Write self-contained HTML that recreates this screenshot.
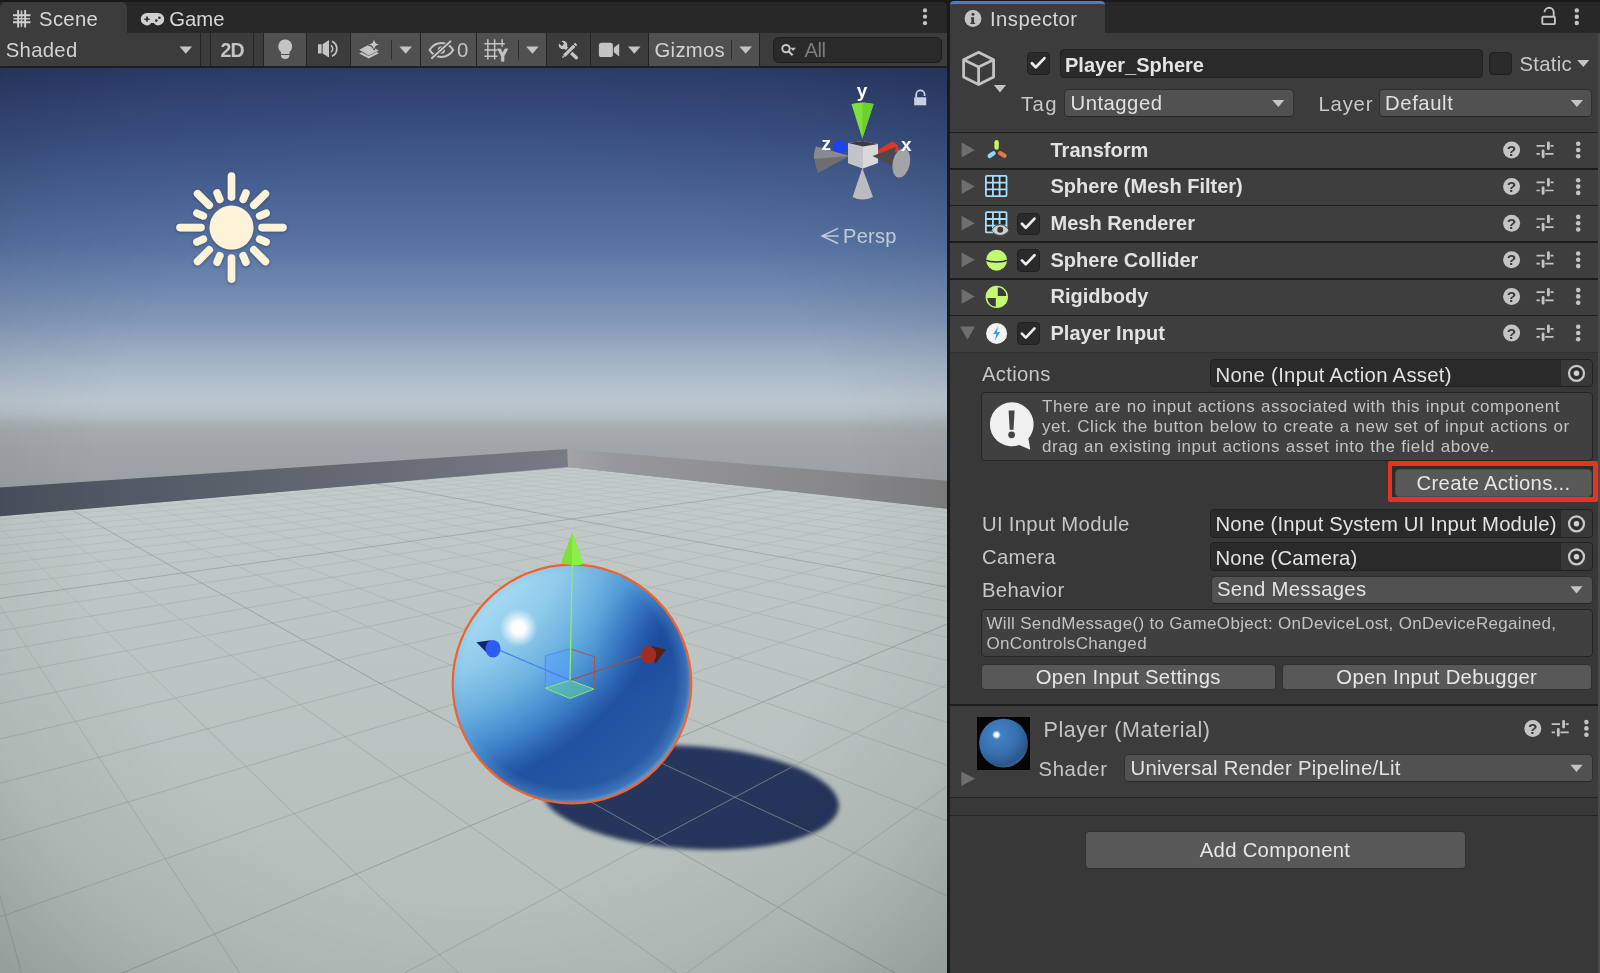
<!DOCTYPE html>
<html lang="en">
<head>
<meta charset="utf-8">
<title>Unity Editor - Player Input</title>
<style>
*{box-sizing:border-box;margin:0;padding:0}
html,body{width:1600px;height:973px;overflow:hidden;background:#191919}
body{position:relative;font-family:"Liberation Sans",sans-serif;font-size:20.300px;color:#d2d2d2;letter-spacing:.3px}
#root{position:absolute;left:0;top:0;width:1600px;height:973px;will-change:transform}
.a{position:absolute}
.t{position:absolute;white-space:nowrap;line-height:24px;height:24px}
.b{font-weight:bold}
/* scene panel */
#scenePanel{left:0;top:1.500px;width:947px;height:971.500px;background:#282828;border-radius:5px 5px 0 0}
#sceneTabBar{left:0;top:1.500px;width:947px;height:31.500px;background:#282828;border-top-right-radius:6px}
#sceneTab{left:0;top:1.500px;width:127px;height:32.500px;background:#3c3c3c;border-radius:6px 6px 0 0}
#toolbar{left:0;top:33px;width:947px;height:34px;background:#3c3c3c}
#toolbarLine{left:0;top:66px;width:947px;height:2px;background:#1f1f1f}
.sep{position:absolute;top:33px;width:1px;height:33px;background:#232323}
.lit{position:absolute;top:33px;height:33px;background:#505050}
#scene{left:0;top:68px;width:947px;height:905px;overflow:hidden}
/* inspector */
#divider{left:947px;top:0;width:3px;height:973px;background:#191919}
#insp{left:950px;top:1.500px;width:650px;height:971.500px;background:#383838}
#inspTabBar{left:950px;top:1.500px;width:650px;height:31.500px;background:#282828}
#inspTab{left:950px;top:1px;width:155px;height:32px;background:#3c3c3c;border-top:3px solid #4a7dc4;border-radius:4px 4px 0 0}
.hline{position:absolute;left:950px;width:650px;height:1px;background:#1e1e1e}
.hdr{position:absolute;left:950px;width:650px;background:#3e3e3e}
.field{position:absolute;background:#2a2a2a;border:1px solid #212121;border-radius:4px}
.drop{position:absolute;background:#515151;border:1px solid #2f2f2f;border-bottom-color:#262626;border-radius:4.500px}
.btn{position:absolute;background:#585858;border:1px solid #303030;border-radius:4px;text-align:center}
.chk{position:absolute;width:22.700px;height:22.700px;background:#2a2a2a;border:1px solid #212121;border-radius:4px}
.help{position:absolute;border:1px solid #232323;border-radius:4px;background:#404040}
.small{font-size:17px;letter-spacing:.53px;word-spacing:.5px;line-height:20px;height:20px}
</style>
</head>
<body>
<div id="root">
<!-- ================= SCENE PANEL ================= -->
<div class="a" id="scenePanel"></div>
<div class="a" id="sceneTabBar"></div>
<div class="a" id="sceneTab"></div>
<div class="a" id="toolbar"></div>
<div class="lit" style="left:264px;width:42px"></div>
<div class="lit" style="left:351px;width:69px"></div>
<div class="lit" style="left:421px;width:55px"></div>
<div class="lit" style="left:477px;width:69px"></div>
<div class="lit" style="left:649px;width:110px"></div>
<div class="sep" style="left:200px"></div><div class="sep" style="left:210px"></div>
<div class="sep" style="left:253px"></div><div class="sep" style="left:263px"></div>
<div class="sep" style="left:306px"></div><div class="sep" style="left:350px"></div>
<div class="sep" style="left:420px"></div><div class="sep" style="left:476px"></div>
<div class="sep" style="left:546px"></div><div class="sep" style="left:590px"></div>
<div class="sep" style="left:648px"></div><div class="sep" style="left:759px"></div>
<div class="t" style="left:39.100px;top:7px;color:#d6d6d6">Scene</div>
<div class="t" style="left:169.300px;top:7px;color:#d6d6d6;letter-spacing:0">Game</div>
<div class="t" style="left:5.800px;top:38px;color:#d2d2d2">Shaded</div>
<div class="t b" style="left:220.5px;top:38px;color:#c4c4c4;letter-spacing:-.9px;font-size:19.500px">2D</div>
<div class="t" style="left:457px;top:38px;color:#c4c4c4">0</div>
<div class="t" style="left:654.5px;top:38px;color:#d2d2d2">Gizmos</div>
<div class="a" style="left:773px;top:37px;width:169px;height:26px;background:#2a2a2a;border:1px solid #1c1c1c;border-radius:6px"></div>
<div class="t" style="left:804.500px;top:38px;color:#7c7c7c;letter-spacing:-.5px">All</div>
<svg class="a" style="left:0;top:0" width="947" height="68" viewBox="0 0 947 68">
<g fill="#c4c4c4">
<!-- scene tab icon -->
<path d="M17.2 10h1.9v17.5h-1.9zM24.2 10h1.9v17.5h-1.9zM13 14.3h17.5v1.9H13zM13 21.3h17.5v1.9H13z" fill="#d0d0d0"/>
<path d="M20.7 10.5h1.6v16.5h-1.6zM13.5 17.9h16.5v1.6H13.5z" fill="#d0d0d0" opacity=".9"/>
<!-- game icon -->
<path d="M147 13h11a6.2 6.2 0 0 1 0 12.4c-2 0-3.2-1-4-2.4h-3c-.8 1.4-2 2.4-4 2.4a6.2 6.2 0 0 1 0-12.4z" fill="#d0d0d0"/>
<path d="M146.2 16.6h1.6v1.8h1.8v1.6h-1.8v1.8h-1.6v-1.8h-1.8v-1.6h1.8z" fill="#282828"/>
<circle cx="156.3" cy="20.6" r="1.3" fill="#282828"/><circle cx="159.4" cy="17.8" r="1.3" fill="#282828"/>
<!-- kebab -->
<circle cx="925" cy="10.4" r="2.1"/><circle cx="925" cy="16.7" r="2.1"/><circle cx="925" cy="23.2" r="2.1"/>
<!-- dropdown arrows -->
<path d="M179.5 46.5h12.6l-6.3 7.2z"/>
<path d="M399.4 46.5h12.6l-6.3 7.2z"/>
<path d="M526.1 46.5h12.6l-6.3 7.2z"/>
<path d="M628 46.5h12.6l-6.3 7.2z"/>
<path d="M739.4 46.5h12.6l-6.3 7.2z"/>
<!-- light bulb -->
<path d="M285.200 39.600a6.900 6.900 0 0 1 4.300 12.300v2.200h-8.600v-2.200a6.900 6.900 0 0 1 4.300-12.300z"/>
<path d="M281 55h8.400v.6a4.200 3.500 0 0 1-8.400 0z"/>
<!-- audio -->
<path d="M318 44.2h3.6v9.3H318zM322.6 44.2l6.4-4.2v17.6l-6.4-4.1z"/>
<path d="M330.8 44.6a4.6 4.6 0 0 1 0 8.4v-1.9a2.8 2.8 0 0 0 0-4.6z"/>
<path d="M332.4 40.6a9 9 0 0 1 0 16.4l-.8-1.6a7.2 7.2 0 0 0 0-13.2z"/>
<!-- fx -->
<path d="M359.200 49.800L367.800 45.300L378.900 50.400L368.700 55.500Z"/>
<path d="M359.200 53.500l2.300-1.200 7.200 3.700 7.900-3.900 2.300 1.200-10.200 5.200z"/>
<path d="M374 38.900c.6 3.700 1.900 5 5.600 5.600-3.700.6-5 1.900-5.600 5.600-.6-3.700-1.900-5-5.600-5.600 3.700-.6 5-1.900 5.600-5.600z" stroke="#505050" stroke-width="1.500" paint-order="stroke"/>
<!-- eye slash -->
<path d="M429.600 50c3.200-5 7.200-7 11.800-7s8.600 2 11.800 7c-3.200 5-7.200 7-11.800 7s-8.600-2-11.800-7z" fill="none" stroke="#c4c4c4" stroke-width="2.100"/>
<circle cx="441.400" cy="50" r="3.700"/>
<path d="M431.500 58.700L451.300 40.800" stroke="#505050" stroke-width="4.200" fill="none"/>
<path d="M431.800 58.200L450.600 41.300" stroke="#c4c4c4" stroke-width="1.900" fill="none" stroke-linecap="round"/>
<!-- grid snap icon -->
<path d="M487.100 39.200h1.500V59.400h-1.500zM493.900 39.200h1.500V59.400h-1.500zM501.400 39.200h1.500V46.800h-1.500zM484.400 43h20.400v1.500H484.400zM484.400 49.200h13v1.500h-13zM484.400 55.400h13v1.500h-13z"/>
<path d="M497.600 48.900h2.900l2.200 4.400 2.200-4.400h2.900l-3.800 7.100v5.200h-2.600v-5.200z" stroke="#c4c4c4" stroke-width=".7"/>
<!-- tools -->
<path d="M565.300 47.300L576.300 57.700" stroke="#c4c4c4" stroke-width="3.500" stroke-linecap="round" fill="none"/>
<circle cx="563" cy="45" r="4.300"/>
<path d="M563 45L557.500 39.500" stroke="#3c3c3c" stroke-width="3.400" fill="none"/>
<path d="M575.070 41.670L578.330 44.930L566.230 57.030L560.900 59.100L562.970 53.770Z" fill="#c4c4c4" stroke="#3c3c3c" stroke-width="1.300"/>
<path d="M572.900 43.900l3.200 3.200" stroke="#3c3c3c" stroke-width="1" fill="none"/>
<path d="M563.400 55.200l1.500 1.500" stroke="#3c3c3c" stroke-width=".7" fill="none"/>
<!-- camera -->
<rect x="598.900" y="42.800" width="14" height="14.200" rx="2.600"/>
<path d="M613.800 47.800l5.400-4.200v12.800l-5.400-4.200z"/>
<!-- search icon -->
<circle cx="786" cy="48.600" r="3.700" fill="none" stroke="#c4c4c4" stroke-width="2"/>
<path d="M788.600 51.200l4 4" stroke="#c4c4c4" stroke-width="2.200" fill="none"/>
<path d="M790.300 47.800h5.600l-2.800 3.300z"/>
</g>
<!-- inner separators -->
<path d="M391.500 40v19.500M518.500 40v19.500M731.500 40v19.500" stroke="#2e2e2e" stroke-width="1"/>
</svg>

<div class="a" id="toolbarLine"></div>
<div class="a" id="scene">
<svg class="a" style="left:0;top:0" width="947" height="905" viewBox="0 68 947 905">
<defs>
<linearGradient id="sky" x1="0" y1="68" x2="0" y2="490" gradientUnits="userSpaceOnUse">
<stop offset="0" stop-color="#2d3e6d"/>
<stop offset="0.199" stop-color="#3f5689"/>
<stop offset="0.425" stop-color="#5875a4"/>
<stop offset="0.597" stop-color="#8298b8"/>
<stop offset="0.706" stop-color="#a6b6c7"/>
<stop offset="0.769" stop-color="#b7c4ce"/>
<stop offset="0.791" stop-color="#bbc7d0"/>
<stop offset="0.819" stop-color="#b5c0c8"/>
<stop offset="0.855" stop-color="#a5abae"/>
<stop offset="0.905" stop-color="#9fa5a8"/>
<stop offset="1" stop-color="#999fa3"/>
</linearGradient>
<linearGradient id="wallL" x1="0" y1="0" x2="568" y2="0" gradientUnits="userSpaceOnUse">
<stop offset="0" stop-color="#4a505c"/><stop offset="0.6" stop-color="#636873"/><stop offset="1" stop-color="#787b86"/>
</linearGradient>
<linearGradient id="wallR" x1="568" y1="0" x2="947" y2="0" gradientUnits="userSpaceOnUse">
<stop offset="0" stop-color="#a3a3a8"/><stop offset="0.12" stop-color="#98989c"/><stop offset="1" stop-color="#7f7f81"/>
</linearGradient>
<linearGradient id="floor" x1="0" y1="467" x2="0" y2="973" gradientUnits="userSpaceOnUse">
<stop offset="0" stop-color="#c3cccb"/><stop offset="0.3" stop-color="#bdc6c4"/><stop offset="1" stop-color="#b4bdba"/>
</linearGradient>
<radialGradient id="sph" cx="393" cy="502" r="374" gradientUnits="userSpaceOnUse">
<stop offset="0.36" stop-color="#a8dbf2"/>
<stop offset="0.49" stop-color="#8fcbea"/>
<stop offset="0.59" stop-color="#6db2e0"/>
<stop offset="0.665" stop-color="#4e96d4"/>
<stop offset="0.72" stop-color="#3a7cc4"/>
<stop offset="0.765" stop-color="#2a62ae"/>
<stop offset="0.80" stop-color="#2052a0"/>
<stop offset="0.896" stop-color="#2457a2"/>
<stop offset="1" stop-color="#2a5ea8"/>
</radialGradient>
<radialGradient id="rim" cx="568.500" cy="680.500" r="124" gradientUnits="userSpaceOnUse">
<stop offset="0" stop-color="#6aa8e0" stop-opacity="0"/>
<stop offset="0.86" stop-color="#6aa8e0" stop-opacity="0"/>
<stop offset="0.955" stop-color="#6fa8e0" stop-opacity="0.3"/>
<stop offset="1" stop-color="#8cc0ee" stop-opacity="0.75"/>
</radialGradient>
<radialGradient id="darkspot" cx="655" cy="640" r="60" gradientUnits="userSpaceOnUse">
<stop offset="0" stop-color="#15409a" stop-opacity="0.35"/>
<stop offset="1" stop-color="#15409a" stop-opacity="0"/>
</radialGradient>
<radialGradient id="spec" cx="518.6" cy="628" r="19" gradientUnits="userSpaceOnUse">
<stop offset="0" stop-color="#fff" stop-opacity="1"/>
<stop offset="0.35" stop-color="#fff" stop-opacity="0.95"/>
<stop offset="1" stop-color="#fff" stop-opacity="0"/>
</radialGradient>
<radialGradient id="vig" cx="473" cy="520" r="660" gradientUnits="userSpaceOnUse"><stop offset="0" stop-color="#000" stop-opacity="0"/><stop offset="0.58" stop-color="#000" stop-opacity="0"/><stop offset="0.8" stop-color="#000" stop-opacity="0.055"/><stop offset="1" stop-color="#000" stop-opacity="0.17"/></radialGradient>
<filter id="blur4" x="-20%" y="-20%" width="140%" height="140%"><feGaussianBlur stdDeviation="2.2"/></filter>
<filter id="sunsh" x="-20%" y="-20%" width="140%" height="140%"><feDropShadow dx="0" dy="1" stdDeviation="1.5" flood-color="#1a2850" flood-opacity="0.55"/></filter>
<linearGradient id="gf" x1="0" y1="467" x2="0" y2="973" gradientUnits="userSpaceOnUse"><stop offset="0" stop-color="#fff" stop-opacity="0.22"/><stop offset="0.25" stop-color="#fff" stop-opacity="0.5"/><stop offset="0.6" stop-color="#fff" stop-opacity="0.85"/><stop offset="1" stop-color="#fff" stop-opacity="1"/></linearGradient>
<mask id="gridfade" maskUnits="userSpaceOnUse" x="0" y="400" width="947" height="573"><rect x="0" y="400" width="947" height="573" fill="url(#gf)"/></mask>
<linearGradient id="gf2" x1="0" y1="467" x2="0" y2="973" gradientUnits="userSpaceOnUse"><stop offset="0" stop-color="#fff" stop-opacity="0.6"/><stop offset="0.4" stop-color="#fff" stop-opacity="0.85"/><stop offset="1" stop-color="#fff" stop-opacity="0.82"/></linearGradient>
<mask id="gridfade2" maskUnits="userSpaceOnUse" x="0" y="400" width="947" height="573"><rect x="0" y="400" width="947" height="573" fill="url(#gf2)"/></mask>
<clipPath id="floorclip"><path d="M0 516.3L568 467L947 508.7V973H0Z"/></clipPath>
<clipPath id="shclip"><ellipse cx="690" cy="797.500" rx="146" ry="49" transform="rotate(3.500 690 797.500)"/></clipPath>
<clipPath id="sphclip"><circle cx="572" cy="684" r="119"/></clipPath>
</defs>
<rect x="0" y="68" width="947" height="905" fill="url(#sky)"/>
<path d="M0 516.3L568 467L947 508.7V973H0Z" fill="url(#floor)"/>
<path d="M0 487.5L567.5 449L568 467L0 516.3Z" fill="url(#wallL)"/>
<path d="M567.5 449L947 480.8V508.7L568 467Z" fill="url(#wallR)"/>
<!-- shadow -->
<g clip-path="url(#floorclip)"><ellipse cx="690" cy="797.500" rx="149" ry="51.500" transform="rotate(3.500 690 797.500)" fill="#26365c" filter="url(#blur4)"/>
</g>
<g clip-path="url(#floorclip)" fill="none" mask="url(#gridfade)">
<path d="M29.1 1000.0L-20.0 824.5M944.2 1000.0L970.0 971.7M257.5 1000.0L-20.0 575.7M649.0 1000.0L970.0 769.9M486.0 1000.0L-12.2 515.6M353.9 1000.0L970.0 672.1M714.4 1000.0L29.9 512.1M-20.0 924.0L970.0 576.2M970.0 906.5L107.5 505.7M-20.0 846.4L970.0 549.1M970.0 829.9L143.3 502.7M-20.0 788.5L970.0 528.9M970.0 773.1L177.3 499.9M-20.0 743.6L970.0 513.3M970.0 729.3L209.6 497.2M-20.0 707.8L941.3 506.8M970.0 694.5L240.4 494.6M-20.0 678.6L905.3 502.9M970.0 666.2L269.8 492.2M-20.0 654.4L871.5 499.3M970.0 642.6L297.8 489.8M-20.0 633.8L839.9 495.9M970.0 622.8L324.6 487.6M-20.0 616.3L810.2 492.7M970.0 605.9L350.2 485.5M-20.0 587.8L755.9 486.8M970.0 578.5L398.2 481.5M-20.0 576.1L731.0 484.1M970.0 567.2L420.7 479.6M-20.0 565.7L707.4 481.6M970.0 557.2L442.4 477.8M-20.0 556.4L685.1 479.2M970.0 548.3L463.2 476.1M-20.0 548.0L663.9 476.9M970.0 540.3L483.1 474.5M-20.0 540.4L643.8 474.7M970.0 533.0L502.4 472.9M-20.0 533.5L624.7 472.7M970.0 526.5L520.9 471.3M-20.0 527.3L606.5 470.7M970.0 520.5L538.7 469.8M-20.0 521.5L589.1 468.8M970.0 515.0L555.9 468.4" stroke="#8a9290" stroke-opacity="0.5" stroke-width="1"/>
</g>
<g clip-path="url(#floorclip)" fill="none" mask="url(#gridfade2)"><path d="M58.7 1000.0L970.0 614.3M942.9 1000.0L69.7 508.8M-20.0 601.1L782.3 489.7M970.0 591.2L374.7 483.5M-20.0 516.2L572.5 467.0M970.0 509.9L572.5 467.0" stroke="#7a8280" stroke-opacity="0.62" stroke-width="1"/></g>
<g clip-path="url(#shclip)" fill="none"><path d="M29.1 1000.0L-20.0 824.5M944.2 1000.0L970.0 971.7M257.5 1000.0L-20.0 575.7M649.0 1000.0L970.0 769.9M486.0 1000.0L-12.2 515.6M353.9 1000.0L970.0 672.1M714.4 1000.0L29.9 512.1M-20.0 924.0L970.0 576.2M970.0 906.5L107.5 505.7M-20.0 846.4L970.0 549.1M970.0 829.9L143.3 502.7M-20.0 788.5L970.0 528.9M970.0 773.1L177.3 499.9M-20.0 743.6L970.0 513.3M970.0 729.3L209.6 497.2M-20.0 707.8L941.3 506.8M970.0 694.5L240.4 494.6M-20.0 678.6L905.3 502.9M970.0 666.2L269.8 492.2M-20.0 654.4L871.5 499.3M970.0 642.6L297.8 489.8M-20.0 633.8L839.9 495.9M970.0 622.8L324.6 487.6M-20.0 616.3L810.2 492.7M970.0 605.9L350.2 485.5M-20.0 587.8L755.9 486.8M970.0 578.5L398.2 481.5M-20.0 576.1L731.0 484.1M970.0 567.2L420.7 479.6M-20.0 565.7L707.4 481.6M970.0 557.2L442.4 477.8M-20.0 556.4L685.1 479.2M970.0 548.3L463.2 476.1M-20.0 548.0L663.9 476.9M970.0 540.3L483.1 474.5M-20.0 540.4L643.8 474.7M970.0 533.0L502.4 472.9M-20.0 533.5L624.7 472.7M970.0 526.5L520.9 471.3M-20.0 527.3L606.5 470.7M970.0 520.5L538.7 469.8M-20.0 521.5L589.1 468.8M970.0 515.0L555.9 468.4M58.7 1000.0L970.0 614.3M942.9 1000.0L69.7 508.8M-20.0 601.1L782.3 489.7M970.0 591.2L374.7 483.5M-20.0 516.2L572.5 467.0M970.0 509.9L572.5 467.0" stroke="#8f959a" stroke-opacity="0.45" stroke-width="1"/></g>
<!-- sphere -->
<circle cx="572" cy="684" r="119" fill="url(#sph)"/>
<g clip-path="url(#sphclip)">
<circle cx="655" cy="640" r="60" fill="url(#darkspot)"/>
<circle cx="568.500" cy="680.500" r="124" fill="url(#rim)"/>
<circle cx="518.6" cy="628" r="22" fill="url(#spec)"/>
</g>
<circle cx="572" cy="684" r="119.3" fill="none" stroke="#f0622a" stroke-width="2.200"/>
<!-- move gizmo -->
<path d="M545.3 655.7L570 648.9V680.3L545.3 688.1Z" fill="#5aa0ff" fill-opacity="0.55" stroke="#4a8cf5" stroke-width="1"/>
<path d="M570 680.3L545.3 688.1L570 698.4L594 689Z" fill="#62d0a8" fill-opacity="0.55" stroke="#8aea6a" stroke-width="1"/>
<path d="M570 648.9L594.6 656.7L594 689" fill="none" stroke="#b0504a" stroke-width="1"/>
<path d="M570 680.3L500 650.5" stroke="#3f7ff5" stroke-width="1.2"/>
<path d="M570 680.3L642 655.7" stroke="#a84a48" stroke-width="1.2"/>
<path d="M570 680.3L572.2 564" stroke="#8fee6a" stroke-width="1.3"/>
<path d="M572.2 532.3L561 563Q572 566.5 583.4 564Z" fill="#7fe03c"/>
<path d="M572.2 532.3L572 565.5Q578 565.5 583.4 564Z" fill="#8df048"/>
<path d="M476.4 642.3L491 640.2L487 653Z" fill="#14246e"/>
<ellipse cx="493" cy="648.7" rx="7.6" ry="8.8" fill="#2c5cf0"/>
<path d="M666.2 649.5L651 646L655 664Z" fill="#5a1e18"/>
<ellipse cx="648.5" cy="655" rx="7.6" ry="9" fill="#a02c22"/>
<rect x="0" y="68" width="947" height="905" fill="url(#vig)"/>
<!-- sun -->
<g filter="url(#sunsh)"><path d="M262.0 227.6L283.0 227.6M259.7 239.3L266.1 242.0M253.8 249.9L265.4 261.5M243.2 255.8L245.9 262.2M231.5 258.1L231.5 279.1M219.8 255.8L217.1 262.2M209.2 249.9L197.6 261.5M203.3 239.3L196.9 242.0M201.0 227.6L180.0 227.6M203.3 215.9L196.9 213.2M209.2 205.3L197.6 193.7M219.8 199.4L217.1 193.0M231.5 197.1L231.5 176.1M243.2 199.4L245.9 193.0M253.8 205.3L265.4 193.7M259.7 215.9L266.1 213.2" stroke="#fdf3d8" stroke-width="7.6" stroke-linecap="round" fill="none"/><circle cx="231.5" cy="227.6" r="22" fill="#fdf3d8"/></g>
<!-- orientation gizmo -->
<g id="og">
<circle cx="840.2" cy="147" r="6.8" fill="#1a44f0"/>
<path d="M877 150.500L892 141.500Q898.500 143 899 151L878 158Z" fill="#d63a26"/>
<path d="M849.5 156L816 146.5Q812 158 818 173Z" fill="#6e6e72"/>
<path d="M849.5 156L816 146.5Q813.5 152 814 159Z" fill="#8a8a8e"/>
<path d="M862.3 168L852.6 197Q862 202 873 197Z" fill="#bcbcc0"/>
<path d="M848 143L863 141L878 144V163L863 168.5L848 163Z" fill="#d9d9dc"/>
<path d="M848 143L863 146.5V168.5L848 163Z" fill="#c4c4c8"/>
<path d="M848 143L863 141L878 144L863 146.5Z" fill="#3c3c40"/>
<path d="M872.5 156L897 168Q892 158 896 147Z" fill="#4a4a4e"/>
<ellipse cx="901.3" cy="163" rx="8.6" ry="14.8" transform="rotate(12 901.3 163)" fill="#a4a4a8"/>
<path d="M862.3 138.5L851.5 104Q862 101 873.6 104Z" fill="#7fe03c"/>
<path d="M862.3 138.5L862.3 102.5Q868 102.5 873.6 104Z" fill="#6fce30"/>
</g>
<text x="862.3" y="97" font-family="Liberation Sans, sans-serif" font-weight="bold" font-size="19" fill="#fff" text-anchor="middle">y</text>
<text x="826.5" y="150" font-family="Liberation Sans, sans-serif" font-weight="bold" font-size="19" fill="#fff" text-anchor="middle">z</text>
<text x="906.5" y="151" font-family="Liberation Sans, sans-serif" font-weight="bold" font-size="19" fill="#fff" text-anchor="middle">x</text>
<!-- lock -->
<path d="M916.200 97.500V94.500a4.200 4.200 0 0 1 8.400 0v1.500" fill="none" stroke="#c9cfe0" stroke-width="1.800"/>
<rect x="914.200" y="97.300" width="12" height="8" fill="#c9cfe0"/>
<!-- persp -->
<path d="M837.5 228.6L822 236L837.5 243.2M822 236H838" fill="none" stroke="#c3cad8" stroke-width="1.5" stroke-linecap="round"/>
<text x="843" y="243" font-family="Liberation Sans, sans-serif" font-size="20" letter-spacing="0.3" fill="#c3cad8">Persp</text>
</svg>
</div>
<!-- ================= INSPECTOR ================= -->
<div class="a" id="divider"></div>
<div class="a" id="insp"></div>
<div class="a" id="inspTabBar"></div>
<div class="a" id="inspTab"></div>
<div class="a" style="left:950px;top:33px;width:650px;height:99px;background:#3c3c3c"></div>
<div class="t" style="left:990px;top:6.700px;color:#d6d6d6;letter-spacing:.46px">Inspector</div>
<div class="chk" style="left:1027px;top:52px"></div>
<div class="field" style="left:1060px;top:49px;width:423px;height:29px"></div>
<div class="t b" style="left:1065px;top:53px;color:#e4e4e4;letter-spacing:0;font-size:20px">Player_Sphere</div>
<div class="chk" style="left:1489px;top:52px"></div>
<div class="t" style="left:1519.500px;top:51.500px;color:#c8c8c8">Static</div>
<div class="t" style="left:1021px;top:91.500px;color:#c8c8c8;letter-spacing:1.400px">Tag</div>
<div class="drop" style="left:1064.200px;top:89.300px;width:230.300px;height:27.900px"></div>
<div class="t" style="left:1070.500px;top:90.500px;color:#e0e0e0;letter-spacing:.5px">Untagged</div>
<div class="t" style="left:1318.500px;top:91.500px;color:#c8c8c8;letter-spacing:.8px">Layer</div>
<div class="drop" style="left:1379.400px;top:89.300px;width:213.100px;height:27.900px"></div>
<div class="t" style="left:1385px;top:90.500px;color:#e0e0e0;letter-spacing:.6px">Default</div>
<div class="hdr" style="top:132.4px;height:36.6px"></div>
<div class="t b" style="left:1050.500px;top:137.7px;color:#e2e2e2;letter-spacing:0;font-size:20px">Transform</div>
<div class="hdr" style="top:169.0px;height:36.6px"></div>
<div class="t b" style="left:1050.500px;top:174.3px;color:#e2e2e2;letter-spacing:0;font-size:20px">Sphere (Mesh Filter)</div>
<div class="hdr" style="top:205.6px;height:36.6px"></div>
<div class="t b" style="left:1050.500px;top:210.9px;color:#e2e2e2;letter-spacing:0;font-size:20px">Mesh Renderer</div>
<div class="chk" style="left:1017px;top:212.5px"></div>
<div class="hdr" style="top:242.2px;height:36.6px"></div>
<div class="t b" style="left:1050.500px;top:247.5px;color:#e2e2e2;letter-spacing:0;font-size:20px">Sphere Collider</div>
<div class="chk" style="left:1017px;top:249.1px"></div>
<div class="hdr" style="top:278.8px;height:36.6px"></div>
<div class="t b" style="left:1050.500px;top:284.1px;color:#e2e2e2;letter-spacing:0;font-size:20px">Rigidbody</div>
<div class="hdr" style="top:315.4px;height:36.6px"></div>
<div class="t b" style="left:1050.500px;top:320.7px;color:#e2e2e2;letter-spacing:0;font-size:20px">Player Input</div>
<div class="chk" style="left:1017px;top:322.3px"></div>
<div class="hline" style="top:131.55px;height:1.700px;background:#1e1e1e"></div>
<div class="hline" style="top:168.15px;height:1.700px;background:#1e1e1e"></div>
<div class="hline" style="top:204.75px;height:1.700px;background:#1e1e1e"></div>
<div class="hline" style="top:241.35px;height:1.700px;background:#1e1e1e"></div>
<div class="hline" style="top:277.95px;height:1.700px;background:#1e1e1e"></div>
<div class="hline" style="top:314.55px;height:1.700px;background:#1e1e1e"></div>
<div class="hline" style="top:351.500px;background:#303030"></div>
<div class="t" style="left:982px;top:362px;color:#c6c6c6">Actions</div>
<div class="field" style="left:1210px;top:359px;width:383px;height:28px"></div>
<div class="a" style="left:1561px;top:360px;width:31px;height:26px;background:#383838;border-radius:0 3px 3px 0"></div>
<div class="t" style="left:1215.500px;top:362.500px;color:#e2e2e2">None (Input Action Asset)</div>
<div class="help" style="left:980.500px;top:392px;width:612px;height:69px"></div>
<div class="t small" style="left:1042px;top:396.5px;color:#c2c2c2">There are no input actions associated with this input component</div>
<div class="t small" style="left:1042px;top:416.6px;color:#c2c2c2">yet. Click the button below to create a new set of input actions or</div>
<div class="t small" style="left:1042px;top:436.8px;color:#c2c2c2">drag an existing input actions asset into the field above.</div>
<div class="a" style="left:1387.600px;top:461.200px;width:210.200px;height:40.800px;background:#e43223;border-radius:2px"></div>
<div class="a" style="left:1392.400px;top:466.200px;width:200.400px;height:30.800px;background:#2a2e2e"></div>
<div class="btn" style="left:1394.800px;top:469.200px;width:197.400px;height:27.600px;border-color:#4a4a4a"></div>
<div class="t" style="left:1395px;width:197px;text-align:center;top:470.500px;color:#e6e6e6">Create Actions...</div>
<div class="t" style="left:982px;top:512px;color:#c6c6c6">UI Input Module</div>
<div class="field" style="left:1210px;top:508.800px;width:383px;height:28.800px"></div>
<div class="a" style="left:1561px;top:509.800px;width:31px;height:26.800px;background:#383838;border-radius:0 3px 3px 0"></div>
<div class="t" style="left:1215.500px;top:512.300px;letter-spacing:.18px;color:#e2e2e2">None (Input System UI Input Module)</div>
<div class="t" style="left:982px;top:545px;color:#c6c6c6">Camera</div>
<div class="field" style="left:1210px;top:542.300px;width:383px;height:28.300px"></div>
<div class="a" style="left:1561px;top:543.300px;width:31px;height:26.300px;background:#383838;border-radius:0 3px 3px 0"></div>
<div class="t" style="left:1215.500px;top:545.700px;letter-spacing:.17px;color:#e2e2e2">None (Camera)</div>
<div class="t" style="left:982px;top:578px;color:#c6c6c6">Behavior</div>
<div class="drop" style="left:1210.800px;top:575.700px;width:381.900px;height:28px"></div>
<div class="t" style="left:1217px;top:577px;color:#e2e2e2">Send Messages</div>
<div class="help" style="left:980.500px;top:609px;width:612px;height:48px"></div>
<div class="t small" style="left:986.500px;top:613.8px;color:#c2c2c2;letter-spacing:.32px;word-spacing:0">Will SendMessage() to GameObject: OnDeviceLost, OnDeviceRegained,</div>
<div class="t small" style="left:986.500px;top:633.9px;color:#c2c2c2;letter-spacing:.32px;word-spacing:0">OnControlsChanged</div>
<div class="btn" style="left:981px;top:663.500px;width:294.500px;height:26.500px"></div>
<div class="t" style="left:981px;width:294.500px;text-align:center;top:664.500px;color:#e6e6e6">Open Input Settings</div>
<div class="btn" style="left:1281.500px;top:663.500px;width:310.500px;height:26.500px"></div>
<div class="t" style="left:1281.500px;width:310.500px;text-align:center;top:664.500px;color:#e6e6e6">Open Input Debugger</div>
<div class="hline" style="top:704px;height:1.600px;background:#1f1f1f"></div>
<div class="a" style="left:950px;top:705.600px;width:650px;height:91.400px;background:#3c3c3c"></div>
<div class="a" style="left:977px;top:716.500px;width:53px;height:53px;background:#050505"></div>
<div class="t" style="left:1043.500px;top:717.500px;color:#c4c4c4;font-size:21.500px;letter-spacing:.55px">Player (Material)</div>
<div class="t" style="left:1038.500px;top:757px;color:#c6c6c6;letter-spacing:.6px">Shader</div>
<div class="drop" style="left:1123.800px;top:754px;width:468.900px;height:28.400px"></div>
<div class="t" style="left:1130.500px;top:756px;color:#e2e2e2">Universal Render Pipeline/Lit</div>
<div class="hline" style="top:797px;height:1px;background:#242424"></div>
<div class="hline" style="top:815px;height:1px;background:#242424"></div>
<div class="btn" style="left:1084.500px;top:831px;width:381px;height:37.500px;border-radius:4px"></div>
<div class="t" style="left:1084.500px;width:381px;text-align:center;top:838px;color:#e6e6e6">Add Component</div>
<div class="a" style="left:1598px;top:33px;width:2px;height:940px;background:#4a4a4a"></div>
<svg class="a" style="left:950px;top:0" width="650" height="973" viewBox="950 0 650 973">
<defs><radialGradient id="matg" cx="998" cy="735" r="36" gradientUnits="userSpaceOnUse"><stop offset="0" stop-color="#4585c8"/><stop offset="0.55" stop-color="#376fae"/><stop offset="0.85" stop-color="#2b5688"/><stop offset="1" stop-color="#4a7098"/></radialGradient><radialGradient id="mats" cx="996.500" cy="734.800" r="4.500" gradientUnits="userSpaceOnUse"><stop offset="0" stop-color="#fff"/><stop offset="0.45" stop-color="#fff" stop-opacity=".9"/><stop offset="1" stop-color="#fff" stop-opacity="0"/></radialGradient></defs>
<circle cx="973" cy="18.500" r="8.400" fill="#c4c4c4"/><circle cx="973" cy="14.300" r="1.500" fill="#3c3c3c"/><path d="M971.300 17.200h2.800v5.600h1v1.300h-4.800v-1.300h1v-4.300h-1z" fill="#3c3c3c"/>
<rect x="1542.300" y="16.800" width="12.600" height="7.300" rx="1" fill="none" stroke="#c4c4c4" stroke-width="1.900"/>
<path d="M1544.500 12.300a4.600 4.600 0 0 1 9.200 .2v4" fill="none" stroke="#c4c4c4" stroke-width="1.900"/>
<circle cx="1576.800" cy="10.4" r="2.200" fill="#c4c4c4"/>
<circle cx="1576.800" cy="16.7" r="2.200" fill="#c4c4c4"/>
<circle cx="1576.800" cy="23.0" r="2.200" fill="#c4c4c4"/>
<path d="M978.600 52.300L993.600 59.700V77.100L978.600 84.600L963.600 77.100V59.700ZM963.600 59.700L978.600 67.100L993.600 59.700M978.600 67.100V84.600" fill="none" stroke="#c2c2c2" stroke-width="2.800" stroke-linejoin="round"/>
<path d="M993.900 85h12.200l-6.100 7.400z" fill="#c4c4c4"/>
<path d="M1031.9 63.3l3.900 4 8.700-9.200" fill="none" stroke="#ececec" stroke-width="2.700" stroke-linecap="round" stroke-linejoin="round"/>
<path d="M1577.2 60.0h12.200l-6.100 7.100z" fill="#c4c4c4"/>
<path d="M1272.2 100.0h12.200l-6.100 7.100z" fill="#c4c4c4"/>
<path d="M1570.8 100.0h12.200l-6.100 7.100z" fill="#c4c4c4"/>
<path d="M1570.4 586.3h12.200l-6.100 7.100z" fill="#c4c4c4"/>
<path d="M1570.4 764.8h12.200l-6.100 7.100z" fill="#c4c4c4"/>
<path d="M961.600 142.6L974.800 150.0L961.600 157.4Z" fill="#6e6e6e"/>
<circle cx="1511.600" cy="150.0" r="8.500" fill="#c4c4c4"/>
<text x="1511.600" y="155.5" font-family="Liberation Sans, sans-serif" font-weight="bold" font-size="15.500" text-anchor="middle" fill="#3a3a3a">?</text>
<path d="M1536.500 145.8h8.300M1550.500 145.8h3M1536.500 153.9h3.300M1545.200 153.9h8.300" stroke="#c4c4c4" stroke-width="1.700" fill="none"/>
<path d="M1548.400 142.9v5.800M1543.100 151.0v5.800" stroke="#c4c4c4" stroke-width="2.800" stroke-linecap="round" fill="none"/>
<circle cx="1578.200" cy="143.7" r="2.300" fill="#c4c4c4"/>
<circle cx="1578.200" cy="150.0" r="2.300" fill="#c4c4c4"/>
<circle cx="1578.200" cy="156.3" r="2.300" fill="#c4c4c4"/>
<path d="M961.600 179.2L974.800 186.6L961.600 194.0Z" fill="#6e6e6e"/>
<circle cx="1511.600" cy="186.6" r="8.500" fill="#c4c4c4"/>
<text x="1511.600" y="192.1" font-family="Liberation Sans, sans-serif" font-weight="bold" font-size="15.500" text-anchor="middle" fill="#3a3a3a">?</text>
<path d="M1536.500 182.4h8.300M1550.500 182.4h3M1536.500 190.5h3.300M1545.200 190.5h8.300" stroke="#c4c4c4" stroke-width="1.700" fill="none"/>
<path d="M1548.400 179.5v5.800M1543.100 187.6v5.800" stroke="#c4c4c4" stroke-width="2.800" stroke-linecap="round" fill="none"/>
<circle cx="1578.200" cy="180.3" r="2.300" fill="#c4c4c4"/>
<circle cx="1578.200" cy="186.6" r="2.300" fill="#c4c4c4"/>
<circle cx="1578.200" cy="192.9" r="2.300" fill="#c4c4c4"/>
<path d="M961.600 215.8L974.800 223.2L961.600 230.6Z" fill="#6e6e6e"/>
<circle cx="1511.600" cy="223.2" r="8.500" fill="#c4c4c4"/>
<text x="1511.600" y="228.7" font-family="Liberation Sans, sans-serif" font-weight="bold" font-size="15.500" text-anchor="middle" fill="#3a3a3a">?</text>
<path d="M1536.500 219.0h8.300M1550.500 219.0h3M1536.500 227.1h3.300M1545.200 227.1h8.300" stroke="#c4c4c4" stroke-width="1.700" fill="none"/>
<path d="M1548.400 216.1v5.800M1543.100 224.2v5.800" stroke="#c4c4c4" stroke-width="2.800" stroke-linecap="round" fill="none"/>
<circle cx="1578.200" cy="216.9" r="2.300" fill="#c4c4c4"/>
<circle cx="1578.200" cy="223.2" r="2.300" fill="#c4c4c4"/>
<circle cx="1578.200" cy="229.5" r="2.300" fill="#c4c4c4"/>
<path d="M961.600 252.4L974.800 259.8L961.600 267.2Z" fill="#6e6e6e"/>
<circle cx="1511.600" cy="259.8" r="8.500" fill="#c4c4c4"/>
<text x="1511.600" y="265.3" font-family="Liberation Sans, sans-serif" font-weight="bold" font-size="15.500" text-anchor="middle" fill="#3a3a3a">?</text>
<path d="M1536.500 255.6h8.300M1550.500 255.6h3M1536.500 263.7h3.300M1545.200 263.7h8.300" stroke="#c4c4c4" stroke-width="1.700" fill="none"/>
<path d="M1548.400 252.7v5.800M1543.100 260.8v5.800" stroke="#c4c4c4" stroke-width="2.800" stroke-linecap="round" fill="none"/>
<circle cx="1578.200" cy="253.5" r="2.300" fill="#c4c4c4"/>
<circle cx="1578.200" cy="259.8" r="2.300" fill="#c4c4c4"/>
<circle cx="1578.200" cy="266.1" r="2.300" fill="#c4c4c4"/>
<path d="M961.600 289.0L974.800 296.4L961.600 303.8Z" fill="#6e6e6e"/>
<circle cx="1511.600" cy="296.4" r="8.500" fill="#c4c4c4"/>
<text x="1511.600" y="301.9" font-family="Liberation Sans, sans-serif" font-weight="bold" font-size="15.500" text-anchor="middle" fill="#3a3a3a">?</text>
<path d="M1536.500 292.2h8.300M1550.500 292.2h3M1536.500 300.3h3.300M1545.200 300.3h8.300" stroke="#c4c4c4" stroke-width="1.700" fill="none"/>
<path d="M1548.400 289.3v5.800M1543.100 297.4v5.800" stroke="#c4c4c4" stroke-width="2.800" stroke-linecap="round" fill="none"/>
<circle cx="1578.200" cy="290.1" r="2.300" fill="#c4c4c4"/>
<circle cx="1578.200" cy="296.4" r="2.300" fill="#c4c4c4"/>
<circle cx="1578.200" cy="302.7" r="2.300" fill="#c4c4c4"/>
<path d="M960 326.5H975L967.500 339.8Z" fill="#6e6e6e"/>
<circle cx="1511.600" cy="333.0" r="8.500" fill="#c4c4c4"/>
<text x="1511.600" y="338.5" font-family="Liberation Sans, sans-serif" font-weight="bold" font-size="15.500" text-anchor="middle" fill="#3a3a3a">?</text>
<path d="M1536.500 328.8h8.300M1550.500 328.8h3M1536.500 336.9h3.300M1545.200 336.9h8.300" stroke="#c4c4c4" stroke-width="1.700" fill="none"/>
<path d="M1548.400 325.9v5.800M1543.100 334.0v5.800" stroke="#c4c4c4" stroke-width="2.800" stroke-linecap="round" fill="none"/>
<circle cx="1578.200" cy="326.7" r="2.300" fill="#c4c4c4"/>
<circle cx="1578.200" cy="333.0" r="2.300" fill="#c4c4c4"/>
<circle cx="1578.200" cy="339.3" r="2.300" fill="#c4c4c4"/>
<path d="M1021.9 223.8l3.900 4 8.700-9.200" fill="none" stroke="#ececec" stroke-width="2.700" stroke-linecap="round" stroke-linejoin="round"/>
<path d="M1021.9 260.4l3.900 4 8.700-9.200" fill="none" stroke="#ececec" stroke-width="2.700" stroke-linecap="round" stroke-linejoin="round"/>
<path d="M1021.9 333.6l3.900 4 8.700-9.200" fill="none" stroke="#ececec" stroke-width="2.700" stroke-linecap="round" stroke-linejoin="round"/>
<path d="M996.600 142.300V147.600" stroke="#c5f562" stroke-width="4.400" stroke-linecap="round"/>
<path d="M993.500 153.300L989.700 155.900" stroke="#8fd5ff" stroke-width="4.400" stroke-linecap="round"/>
<path d="M1000.200 153.200L1004.400 155.600" stroke="#e8744c" stroke-width="4.400" stroke-linecap="round"/>
<rect x="985.9" y="175.9" width="20.600" height="20.200" fill="#2e2622" stroke="#a2ddff" stroke-width="1.800" rx="1"/>
<path d="M992.9 176.0v20M999.6 176.0v20M986.0 182.7h20.400M986.0 189.3h20.400" stroke="#a2ddff" stroke-width="1.800" fill="none"/>
<rect x="985.9" y="212.2" width="20.600" height="20.200" fill="#2e2622" stroke="#a2ddff" stroke-width="1.800" rx="1"/>
<path d="M992.9 212.3v20M999.6 212.3v20M986.0 219.0h20.400M986.0 225.6h20.400" stroke="#a2ddff" stroke-width="1.800" fill="none"/>
<path d="M991.400 230.200c2.600-4 5.600-5.600 8.800-5.600s6.200 1.600 8.800 5.600c-2.600 3.800-5.600 5.200-8.800 5.200s-6.200-1.400-8.800-5.200z" fill="#cfcfcf" stroke="#3e3e3e" stroke-width="1"/>
<circle cx="1000.200" cy="229.800" r="3" fill="#3a3a3a"/>
<circle cx="996.600" cy="260.200" r="10.500" fill="#c3f870"/>
<path d="M986.300 260.200c3.400 2.400 17.200 2.400 20.600 0" fill="none" stroke="#2a2a3a" stroke-width="1.500"/>
<circle cx="996.800" cy="296.900" r="11.200" fill="#c3f870"/>
<path d="M997.800 295.900V287.300a8.800 8.800 0 0 1 8.500 8.600zM995.800 297.900V306.500a8.800 8.800 0 0 1-8.500-8.600z" fill="#3a3a3a"/>
<circle cx="996.600" cy="333.400" r="10.500" fill="#f2f2f2"/>
<path d="M998.200 326.300l-5 7.800h3.200l-1.600 6.600 5.400-8.600h-3.300z" fill="#3d9fda"/>
<circle cx="1576.500" cy="373.3" r="7.500" fill="none" stroke="#c8c8c8" stroke-width="2.200"/><circle cx="1576.500" cy="373.3" r="4.700" fill="none" stroke="#262626" stroke-width="1.400"/><circle cx="1576.500" cy="373.3" r="2.700" fill="#d0d0d0"/>
<circle cx="1576.500" cy="523.8" r="7.500" fill="none" stroke="#c8c8c8" stroke-width="2.200"/><circle cx="1576.500" cy="523.8" r="4.700" fill="none" stroke="#262626" stroke-width="1.400"/><circle cx="1576.500" cy="523.8" r="2.700" fill="#d0d0d0"/>
<circle cx="1576.500" cy="556.8" r="7.500" fill="none" stroke="#c8c8c8" stroke-width="2.200"/><circle cx="1576.500" cy="556.8" r="4.700" fill="none" stroke="#262626" stroke-width="1.400"/><circle cx="1576.500" cy="556.8" r="2.700" fill="#d0d0d0"/>
<path d="M1011.600 402.300a22 22 0 0 1 16.800 36.200l1.900 11.300-11-4.800a22 22 0 1 1-7.700-42.700z" fill="#f0f0f0"/>
<path d="M1008.600 410.400h6l-1.100 19.400h-3.800z" fill="#454545"/><circle cx="1011.600" cy="434.800" r="3.400" fill="#454545"/>
<circle cx="1003.500" cy="743.100" r="24.400" fill="url(#matg)"/><circle cx="996.500" cy="734.800" r="4.500" fill="url(#mats)"/>
<path d="M961.300 771.400L975 778.700L961.300 786Z" fill="#6e6e6e"/>
<circle cx="1532.800" cy="728.4" r="8.500" fill="#c4c4c4"/>
<text x="1532.800" y="733.9" font-family="Liberation Sans, sans-serif" font-weight="bold" font-size="15.500" text-anchor="middle" fill="#3a3a3a">?</text>
<path d="M1551.7 724.2h8.300M1565.7 724.2h3M1551.7 732.3h3.300M1560.4 732.3h8.300" stroke="#c4c4c4" stroke-width="1.700" fill="none"/>
<path d="M1563.6 721.3v5.800M1558.3 729.4v5.800" stroke="#c4c4c4" stroke-width="2.800" stroke-linecap="round" fill="none"/>
<circle cx="1586.400" cy="722.1" r="2.300" fill="#c4c4c4"/>
<circle cx="1586.400" cy="728.4" r="2.300" fill="#c4c4c4"/>
<circle cx="1586.400" cy="734.7" r="2.300" fill="#c4c4c4"/>
</svg>
</div>
</body>
</html>
